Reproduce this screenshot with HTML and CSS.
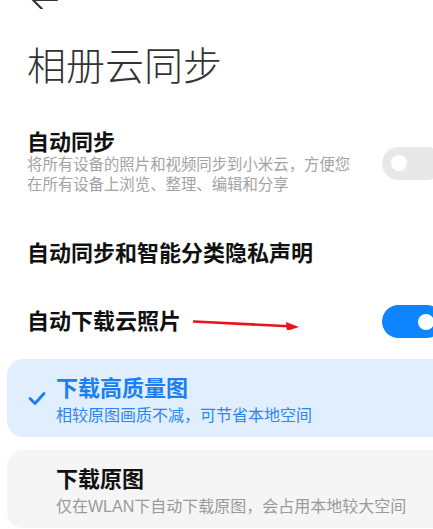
FILE: index.html
```html
<!DOCTYPE html>
<html lang="zh-CN">
<head>
  <meta charset="UTF-8" />
  <meta name="viewport" content="width=device-width, initial-scale=1.0"/>
  <title>相册云同步</title>
  <link rel="stylesheet" href="styles.css">
</head>
<body>

  <div class="page">
    <div class="topbar">
      <svg class="back" width="30" height="24" viewBox="0 0 30 24">
        <path d="M27 15 H3 M12 6 L3 15 L12 24" fill="none" stroke="#333" stroke-width="2.2" stroke-linecap="round" stroke-linejoin="round"/>
      </svg>
    </div>

    <h1 class="title">相册云同步</h1>

    <div class="row row-sync">
      <div class="row-text">
        <div class="row-title">自动同步</div>
        <div class="row-desc">将所有设备的照片和视频同步到小米云，方便您<br>在所有设备上浏览、整理、编辑和分享</div>
      </div>
      <span class="switch"></span>
    </div>

    <div class="row row-link">
      <div class="row-title">自动同步和智能分类隐私声明</div>
    </div>

    <div class="row row-download">
      <div class="row-title">自动下载云照片</div>
      <svg class="mark" width="108" height="16" viewBox="0 0 108 16">
        <path d="M1 7.5 L96 12.3" stroke="#e8141c" stroke-width="2.6" stroke-linecap="round"/>
        <polygon points="106,13 93,8 94,17" fill="#e8141c"/>
      </svg>
      <span class="switch on"></span>
    </div>

    <div class="options">
      <div class="option selected">
        <svg class="check" width="18" height="15" viewBox="0 0 18 15">
          <path d="M2 7.5 L7 12.5 L16 2.5" fill="none" stroke="currentColor" stroke-width="2.8" stroke-linecap="round" stroke-linejoin="round"/>
        </svg>
        <div class="option-text">
          <div class="option-title">下载高质量图</div>
          <div class="option-desc">相较原图画质不减，可节省本地空间</div>
        </div>
      </div>
      <div class="option">
        <span class="check"></span>
        <div class="option-text">
          <div class="option-title">下载原图</div>
          <div class="option-desc">仅在WLAN下自动下载原图，会占用本地较大空间</div>
        </div>
      </div>
    </div>
  </div>

</body>
</html>
```

FILE: styles.css
```css
body {
  margin: 0;
  background: #fff;
  font-family: "Liberation Sans", "Noto Sans CJK SC", sans-serif;
  color: #111;
}

.page {
  width: 433px;
  height: 529px;
  overflow: hidden;
}

.topbar {
  height: 9px;
  overflow: hidden;
}

.back {
  display: block;
  margin: -15px 0 0 30px;
}

.title {
  margin: 39px 27px 0;
  font-size: 39px;
  line-height: 38px;
  font-weight: 300;
  color: #333;
}

.row {
  display: flex;
  align-items: center;
  padding-left: 27px;
}

.row-sync {
  margin-top: 45px;
}

.row-link {
  margin-top: 47px;
}

.row-download {
  margin-top: 39px;
}

.row-title {
  font-size: 22px;
  line-height: 24px;
  font-weight: 700;
  color: #111;
}

.row-desc {
  font-size: 15.4px;
  line-height: 20px;
  color: #a3a3a3;
}

.mark {
  margin-left: 12px;
}

.switch {
  position: relative;
  width: 61px;
  height: 33px;
  margin-left: auto;
  margin-right: -10px;
  border-radius: 17px;
  background: #e8e8e8;
  flex-shrink: 0;
}

.switch::after {
  content: "";
  position: absolute;
  top: 8.5px;
  left: 9px;
  width: 16px;
  height: 16px;
  border-radius: 50%;
  background: #fff;
}

.switch.on {
  background: #0e84ff;
}

.switch.on::after {
  left: 36px;
}

.options {
  margin: 21px -20px 0 7px;
  display: flex;
  flex-direction: column;
  gap: 13px;
}

.option {
  display: flex;
  align-items: center;
  gap: 10px;
  height: 78px;
  box-sizing: border-box;
  padding: 4px 0 0 21px;
  border-radius: 16px;
  background: #f5f5f5;
}

.option.selected {
  background: #e1eefd;
  color: #1a80f2;
}

.option.selected .check {
  margin-top: -4px;
}

.check {
  width: 18px;
  height: 15px;
  flex-shrink: 0;
}

.option-title {
  font-size: 22px;
  line-height: 28px;
  font-weight: 700;
}

.option-desc {
  margin-top: 3px;
  font-size: 16px;
  line-height: 20px;
  color: #9a9a9a;
}

.option.selected .option-desc {
  color: #2d86ef;
}
```
